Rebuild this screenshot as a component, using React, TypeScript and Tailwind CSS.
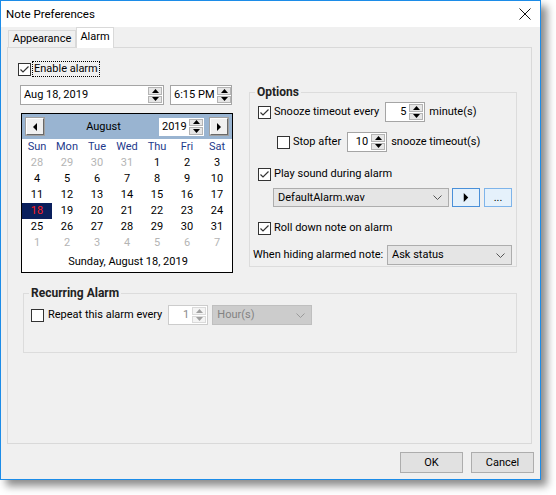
import type { ReactNode } from "react";

const font = { fontFamily: 'Roboto, "Segoe UI", sans-serif' };

function Tri({ dir, className = "" }: { dir: "up" | "down" | "left" | "right"; className?: string }) {
  const pts: Record<string, string> = {
    up: "0,4 3.5,0 7,4",
    down: "0,0 3.5,4 7,0",
    left: "4,0 0,4 4,8",
    right: "0,0 4,4 0,8",
  };
  const vertical = dir === "up" || dir === "down";
  return (
    <svg
      width={vertical ? 7 : 4}
      height={vertical ? 4 : 8}
      viewBox={vertical ? "0 0 7 4" : "0 0 4 8"}
      className={className}
    >
      <polygon points={pts[dir]} fill="currentColor" />
    </svg>
  );
}

function Chevron({ className = "" }: { className?: string }) {
  return (
    <svg width="9" height="5" viewBox="0 0 9 5" className={className}>
      <polyline points="0.5,0.5 4.5,4.5 8.5,0.5" fill="none" stroke="currentColor" strokeWidth="1" />
    </svg>
  );
}

function Check({ checked, disabled }: { checked?: boolean; disabled?: boolean }) {
  return (
    <span
      className={`flex h-[13px] w-[13px] shrink-0 items-center justify-center border bg-white ${
        disabled ? "border-[#bcbcbc]" : "border-[#333333]"
      }`}
    >
      {checked && (
        <svg width="11" height="11" viewBox="0 0 11 11">
          <polyline points="1.5,5.5 4,8 9.5,2.5" fill="none" stroke="#333" strokeWidth="1.2" />
        </svg>
      )}
    </span>
  );
}

function SpinArrows({ disabled }: { disabled?: boolean }) {
  const btn = `flex flex-1 items-center justify-center border ${
    disabled ? "border-[#dadada] bg-[#f4f4f4] text-[#a0a0a0]" : "border-[#b4b4b4] bg-[#e6e6e6] text-black"
  }`;
  return (
    <div className="flex h-full w-[15px] shrink-0 flex-col gap-[1px] py-[1px] pr-[1px]">
      <div className={btn}>
        <Tri dir="up" />
      </div>
      <div className={btn}>
        <Tri dir="down" />
      </div>
    </div>
  );
}

function Spin({
  value,
  width,
  disabled,
  align = "right",
}: {
  value: string;
  width: string;
  disabled?: boolean;
  align?: "left" | "right";
}) {
  return (
    <div
      className={`flex h-[20px] shrink-0 items-center border bg-white ${width} ${
        disabled ? "border-[#cccccc] text-[#8a8a8a]" : "border-[#a5a5a5] text-black"
      }`}
    >
      <span className={`flex-1 whitespace-nowrap px-[3px] ${align === "right" ? "text-right" : "text-left"}`}>
        {value}
      </span>
      <SpinArrows disabled={disabled} />
    </div>
  );
}

function Combo({ value, width, disabled }: { value: string; width: string; disabled?: boolean }) {
  return (
    <div
      className={`flex shrink-0 items-center justify-between border pl-[4px] pr-[6px] ${width} ${
        disabled ? "border-[#bfbfbf] bg-[#cccccc] text-[#838383]" : "border-[#adadad] bg-[#e5e5e5] text-black"
      }`}
    >
      <span>{value}</span>
      <Chevron className={disabled ? "text-[#9a9a9a]" : "text-[#555]"} />
    </div>
  );
}

function Label({ children, className = "" }: { children: ReactNode; className?: string }) {
  return <span className={`whitespace-nowrap ${className}`}>{children}</span>;
}

function NavButton({ dir }: { dir: "left" | "right" }) {
  return (
    <div className="flex h-[17px] w-[18px] shrink-0 items-center justify-center border border-b-[#696969] border-l-white border-r-[#696969] border-t-white bg-[#f0f0f0] outline outline-1 outline-[#a0a0a0]">
      <Tri dir={dir} />
    </div>
  );
}

const weeks: { d: number; muted?: boolean }[][] = [
  [{ d: 28, muted: true }, { d: 29, muted: true }, { d: 30, muted: true }, { d: 31, muted: true }, { d: 1 }, { d: 2 }, { d: 3 }],
  [{ d: 4 }, { d: 5 }, { d: 6 }, { d: 7 }, { d: 8 }, { d: 9 }, { d: 10 }],
  [{ d: 11 }, { d: 12 }, { d: 13 }, { d: 14 }, { d: 15 }, { d: 16 }, { d: 17 }],
  [{ d: 18 }, { d: 19 }, { d: 20 }, { d: 21 }, { d: 22 }, { d: 23 }, { d: 24 }],
  [{ d: 25 }, { d: 26 }, { d: 27 }, { d: 28 }, { d: 29 }, { d: 30 }, { d: 31 }],
  [{ d: 1, muted: true }, { d: 2, muted: true }, { d: 3, muted: true }, { d: 4, muted: true }, { d: 5, muted: true }, { d: 6, muted: true }, { d: 7, muted: true }],
];

const dayNames = ["Sun", "Mon", "Tue", "Wed", "Thu", "Fri", "Sat"];

function Calendar() {
  return (
    <div className="ml-[1px] mt-[8px] flex h-[160px] w-[212px] flex-col border border-black bg-white">
      <div className="flex h-[25px] items-center bg-[#99b4d1] pl-[4px] pr-[4px]">
        <NavButton dir="left" />
        <span className="flex-1 pl-[4px] text-center">August</span>
        <div className="flex h-[18px] w-[45px] items-center bg-white">
          <span className="flex-1 pl-[3px]">2019</span>
          <SpinArrows />
        </div>
        <div className="ml-[6px]">
          <NavButton dir="right" />
        </div>
      </div>
      <div className="grid h-[16px] grid-cols-7 text-[#1e3a8c]">
        {dayNames.map((n) => (
          <span key={n} className="text-center leading-[16px]">
            {n}
          </span>
        ))}
      </div>
      {weeks.map((w, i) => (
        <div key={i} className="grid h-[16px] grid-cols-7">
          {w.map((c, j) => {
            const selected = i === 3 && j === 0;
            return (
              <span
                key={j}
                className={`text-center leading-[16px] ${
                  selected ? "bg-[#0a1f5c] text-[#ff2020]" : c.muted ? "text-[#b4b4b4]" : "text-black"
                }`}
              >
                {c.d}
              </span>
            );
          })}
        </div>
      ))}
      <div className="flex flex-1 items-center justify-center pl-[2px]">Sunday, August 18, 2019</div>
    </div>
  );
}

function Group({ title, className, children }: { title: string; className: string; children: ReactNode }) {
  return (
    <fieldset className={`border border-[#dcdcdc] ${className}`}>
      <legend className="ml-[5px] px-[2px] text-[12px] font-bold leading-[16px] text-[#222]">{title}</legend>
      {children}
    </fieldset>
  );
}

export default function App() {
  return (
    <div className="h-[495px] w-[556px] bg-white text-[11px] leading-[16px] text-black" style={font}>
      <div className="flex h-[480px] w-[541px] flex-col border border-[#1c8ce8] bg-[#f0f0f0] shadow-[6px_6px_8px_rgba(0,0,0,0.45)]">
        {/* title bar */}
        <div className="flex h-[26px] items-center justify-between bg-white pl-[5px] pr-[9px] text-[11.5px]">
          <span>Note Preferences</span>
          <svg width="12" height="12" viewBox="0 0 12 12">
            <path d="M0.5 0.5 L11.5 11.5 M11.5 0.5 L0.5 11.5" stroke="#111" strokeWidth="1" />
          </svg>
        </div>

        {/* tabs */}
        <div className="flex h-[20px] items-end pl-[7px]">
          <div className="flex h-[17px] w-[68px] items-center justify-center border border-b-0 border-[#d9d9d9] bg-[#f0f0f0]">
            Appearance
          </div>
          <div className="relative z-10 -mb-px flex h-[21px] w-[38px] items-start justify-center border border-b-0 border-[#d9d9d9] bg-white pt-[1px]">
            Alarm
          </div>
        </div>

        {/* pane */}
        <div className="ml-[6px] flex h-[397px] w-[525px] flex-col border border-[#d9d9d9] bg-[#f0f0f0]">
          <div className="ml-[10px] mt-[13px] flex items-center gap-[1px]">
            <Check checked />
            <span className="border border-dotted border-black px-[1px] leading-[14px]">Enable alarm</span>
          </div>

          <div className="mt-[8px] flex">
            <div className="ml-[12px] flex w-[212px] flex-col">
              <div className="flex gap-[6px]">
                <Spin value="Aug 18, 2019" width="w-[144px]" align="left" />
                <Spin value="6:15 PM" width="w-[62px]" align="left" />
              </div>
              <Calendar />
            </div>

            <Group title="Options" className="ml-[17px] -mt-[1px] h-[183px] w-[268px]">
              <div className="mt-[2px] flex h-[20px] items-center pl-[8px]">
                <Check checked />
                <Label className="ml-[3px]">Snooze timeout every</Label>
                <div className="ml-[6px]">
                  <Spin value="5" width="w-[40px]" />
                </div>
                <Label className="ml-[4px]">minute(s)</Label>
              </div>
              <div className="mt-[10px] flex h-[20px] items-center pl-[27px]">
                <Check />
                <Label className="ml-[3px]">Stop after</Label>
                <div className="ml-[6px]">
                  <Spin value="10" width="w-[40px]" />
                </div>
                <Label className="ml-[4px]">snooze timeout(s)</Label>
              </div>
              <div className="mt-[12px] flex h-[20px] items-center pl-[8px]">
                <Check checked />
                <Label className="ml-[3px]">Play sound during alarm</Label>
              </div>
              <div className="mt-[4px] flex h-[19px] items-stretch pl-[23px]">
                <Combo value="DefaultAlarm.wav" width="w-[176px]" />
                <div className="ml-[3px] flex w-[28px] items-center justify-center border border-[#4a90d9] bg-[#e5f1fb]">
                  <Tri dir="right" className="h-[9px] w-[6px]" />
                </div>
                <div className="ml-[4px] flex w-[28px] items-center justify-center border border-[#7eb4ea] bg-[#e5f1fb] leading-[10px]">
                  ...
                </div>
              </div>
              <div className="mt-[11px] flex h-[20px] items-center pl-[8px]">
                <Check checked />
                <Label className="ml-[3px]">Roll down note on alarm</Label>
              </div>
              <div className="mt-[7px] flex h-[20px] items-stretch pl-[3px]">
                <Label className="self-center">When hiding alarmed note:</Label>
                <div className="ml-auto mr-[4px] flex">
                  <Combo value="Ask status" width="w-[125px]" />
                </div>
              </div>
            </Group>
          </div>

          <Group title="Recurring Alarm" className="ml-[15px] mt-[12px] h-[68px] w-[494px]">
            <div className="mt-[4px] flex h-[20px] items-stretch pl-[7px]">
              <div className="flex items-center">
                <Check />
              </div>
              <Label className="ml-[4px] self-center">Repeat this alarm every</Label>
              <div className="ml-[6px]">
                <Spin value="1" width="w-[40px]" disabled />
              </div>
              <div className="ml-[4px] flex">
                <Combo value="Hour(s)" width="w-[100px]" disabled />
              </div>
            </div>
          </Group>
        </div>

        {/* buttons */}
        <div className="mt-[8px] flex justify-end gap-[8px] pr-[6px]">
          <div className="flex h-[21px] w-[63px] items-center justify-center border border-[#adadad] bg-[#e1e1e1]">OK</div>
          <div className="flex h-[21px] w-[63px] items-center justify-center border border-[#adadad] bg-[#e1e1e1]">
            Cancel
          </div>
        </div>
      </div>
    </div>
  );
}
